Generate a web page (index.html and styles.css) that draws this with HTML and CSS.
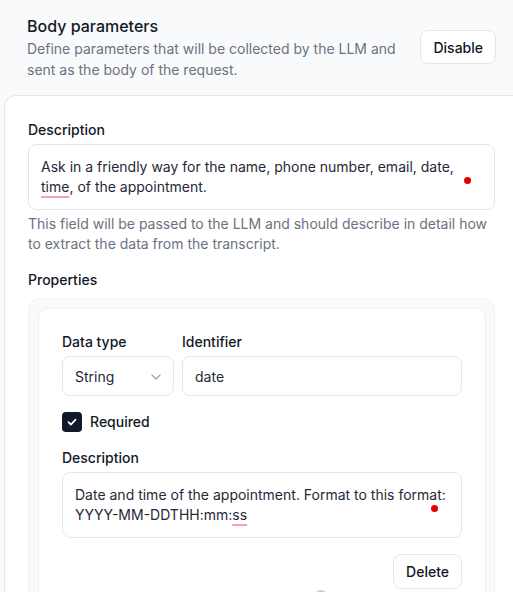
FILE: index.html
```html
<!DOCTYPE html>
<html>
<head>
<meta charset="utf-8">
<link rel="stylesheet" href="styles.css">
</head>
<body>
<header class="head">
  <div class="head-text">
    <h2 class="title">Body parameters</h2>
    <p class="subtitle">Define parameters that will be collected by the LLM and sent as the body of the request.</p>
  </div>
  <button class="btn">Disable</button>
</header>
<section class="card">
  <label class="label">Description</label>
  <div class="area">
    <div class="area-text">Ask in a friendly way for the name, phone number, email, date,<br><span class="spell">time</span>, of the appointment.</div>
    <span class="dot"></span>
  </div>
  <p class="help">This field will be passed to the LLM and should describe in detail how to extract the data from the transcript.</p>
  <label class="label props-label">Properties</label>
  <div class="props">
    <div class="prop">
      <div class="row">
        <div class="field type-field">
          <label class="label">Data type</label>
          <div class="select">
            <span>String</span>
            <svg class="chev" width="10" height="6" viewBox="0 0 10 6"><path d="M1 1l4 4 4-4" fill="none" stroke="#9ca3af" stroke-width="1.2" stroke-linecap="round" stroke-linejoin="round"/></svg>
          </div>
        </div>
        <div class="field id-field">
          <label class="label">Identifier</label>
          <div class="input">date</div>
        </div>
      </div>
      <div class="check-row">
        <span class="check">
          <svg width="12" height="12" viewBox="0 0 12 12"><path d="M2.5 6.2l2.4 2.4 4.6-5" fill="none" stroke="#fff" stroke-width="1.7" stroke-linecap="round" stroke-linejoin="round"/></svg>
        </span>
        <span class="check-label">Required</span>
      </div>
      <label class="label desc2">Description</label>
      <div class="area">
        <div class="area-text">Date and time of the appointment. Format to this format:<br>YYYY-MM-DDTHH:mm:<span class="spell">ss</span></div>
        <span class="dot"></span>
      </div>
      <div class="actions">
        <button class="btn del">Delete</button>
      </div>
      <div class="more"><span class="knob"></span></div>
    </div>
  </div>
</section>
</body>
</html>
```

FILE: styles.css
```css
* { box-sizing: border-box; }
html, body { margin: 0; padding: 0; }
body {
  background: #f9fafb;
  font-family: Inter, "Noto Sans", sans-serif;
  color: #111827;
  width: 513px;
  height: 592px;
  overflow: hidden;
}
.head {
  display: flex;
  align-items: center;
  justify-content: space-between;
  padding: 14px 17px 15px 27px;
}
.head-text { width: 380px; }
.title {
  margin: 0;
  font-size: 16px;
  line-height: 24px;
  font-weight: 500;
  color: #111827;
}
.subtitle {
  margin: 0;
  font-size: 14px;
  line-height: 21px;
  color: #6b7280;
}
.btn {
  font-family: inherit;
  font-size: 14px;
  font-weight: 500;
  color: #111827;
  background: #fff;
  border: 1px solid #e5e7eb;
  border-radius: 8px;
  height: 34px;
  padding: 0 12px;
  cursor: pointer;
}
.card {
  margin-left: 4px;
  width: 540px;
  background: #fff;
  border: 1px solid #e5e7eb;
  border-right: none;
  border-bottom: none;
  border-top-left-radius: 12px;
  padding: 24px 49px 0 23px;
  min-height: 600px;
}
.label {
  display: block;
  font-size: 14px;
  line-height: 20px;
  font-weight: 500;
  color: #111827;
}
.area {
  position: relative;
  margin-top: 4px;
  border: 1px solid #e5e7eb;
  border-radius: 8px;
  padding: 12px 12px;
  font-size: 14px;
  line-height: 20px;
  color: #1f2937;
  background: #fff;
}
.spell {
  text-decoration: underline;
  text-decoration-color: #f6a0b5;
  text-decoration-thickness: 2px;
  text-underline-offset: 4px;
}
.dot {
  position: absolute;
  right: 23px;
  top: 32px;
  width: 7px;
  height: 7px;
  border-radius: 50%;
  background: #e50000;
}
.help {
  margin: 4px 0 0;
  font-size: 14px;
  line-height: 20px;
  color: #6b7280;
}
.props-label { margin-top: 16px; }
.props {
  margin-top: 8px;
  background: #f9fafb;
  border: 1px solid #f1f2f4;
  border-radius: 12px;
  padding: 9px 8px 0 9px;
}
.prop {
  background: #fff;
  border: 1px solid #f0f1f3;
  border-radius: 10px;
  padding: 23px 23px 0 23px;
  min-height: 300px;
}
.row {
  display: flex;
  gap: 8px;
}
.type-field { width: 112px; }
.id-field { flex: 1; }
.select, .input {
  margin-top: 4px;
  height: 40px;
  border: 1px solid #e5e7eb;
  border-radius: 8px;
  display: flex;
  align-items: center;
  padding: 0 12px;
  font-size: 14px;
  color: #1f2937;
}
.select { justify-content: space-between; padding-right: 12px; }
.chev { margin-top: 1px; }
.check-row {
  display: flex;
  align-items: center;
  gap: 8px;
  margin-top: 16px;
}
.check {
  width: 20px;
  height: 20px;
  border-radius: 4px;
  background: #111827;
  display: flex;
  align-items: center;
  justify-content: center;
}
.check-label {
  font-size: 14px;
  font-weight: 500;
  line-height: 20px;
}
.desc2 { margin-top: 16px; }
.actions {
  display: flex;
  justify-content: flex-end;
  margin-top: 16px;
}
.del { height: 35px; padding: 0 12px; }
.more {
  display: flex;
  justify-content: center;
  padding-left: 118px;
  margin-top: 1px;
}
.knob {
  width: 14px;
  height: 14px;
  border-radius: 50%;
  background: #c9ccd1;
}
```
